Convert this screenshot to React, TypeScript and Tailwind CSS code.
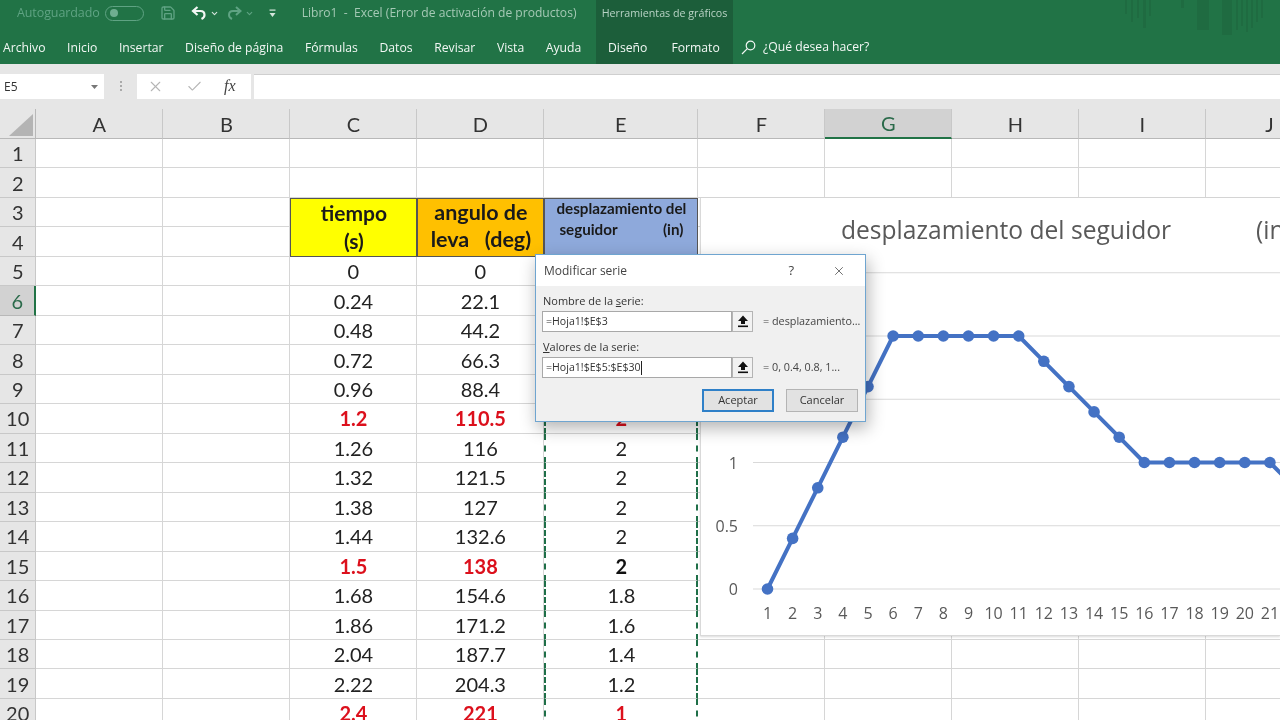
import React from "react";
import { Save, X, Check, ChevronDown } from "lucide-react";

const COLS = ["A", "B", "C", "D", "E", "F", "G", "H", "I", "J"];
type V = { t: string; red?: boolean; bold?: boolean };
const r = (t: string): V => ({ t, red: true });
const n = (t: string): V => ({ t });
const DATA: Record<number, V[]> = {
  5: [n("0"), n("0"), n("0")],
  6: [n("0.24"), n("22.1"), n("0.4")],
  7: [n("0.48"), n("44.2"), n("0.8")],
  8: [n("0.72"), n("66.3"), n("1.2")],
  9: [n("0.96"), n("88.4"), n("1.6")],
  10: [r("1.2"), r("110.5"), r("2")],
  11: [n("1.26"), n("116"), n("2")],
  12: [n("1.32"), n("121.5"), n("2")],
  13: [n("1.38"), n("127"), n("2")],
  14: [n("1.44"), n("132.6"), n("2")],
  15: [r("1.5"), r("138"), { t: "2", bold: true }],
  16: [n("1.68"), n("154.6"), n("1.8")],
  17: [n("1.86"), n("171.2"), n("1.6")],
  18: [n("2.04"), n("187.7"), n("1.4")],
  19: [n("2.22"), n("204.3"), n("1.2")],
  20: [r("2.4"), r("221"), r("1")],
};
const ROWS = Array.from({ length: 20 }, (_, i) => i + 1);
const SERIES = [0, 0.4, 0.8, 1.2, 1.6, 2, 2, 2, 2, 2, 2, 1.8, 1.6, 1.4, 1.2, 1, 1, 1, 1, 1, 1, 0.8];
const px = (i: number) => 66.5 + i * 25.12;
const py = (v: number) => 391 - v * 126.5;

function Tab({ children }: { children: React.ReactNode }) {
  return <span className="whitespace-nowrap text-[12.2px] leading-none text-[#f2f7f4]">{children}</span>;
}

function GridCell({ v, col }: { v?: V; col: number }) {
  const ants = col === 4;
  const borders = ants
    ? "border-b border-b-[#d6d6d6] border-x-2 border-x-[#1f6f48] [border-left-style:dashed] [border-right-style:dashed]"
    : "border-b border-r border-[#d6d6d6]";
  const tone = v?.red ? "font-bold text-[#dc101c]" : v?.bold ? "font-bold text-[#111]" : "text-[#222]";
  return (
    <div className={`flex items-center justify-center bg-white text-[20px] leading-none ${borders} ${tone}`}>
      {v?.t}
    </div>
  );
}

function RefButton() {
  return (
    <div className="flex h-[21px] w-[21px] items-center justify-center border border-[#b4b4b4] bg-[#f2f2f2]">
      <svg width="12" height="13" viewBox="0 0 12 13">
        <path d="M6 0.5 L11 6 H8 V9 H4 V6 H1 Z" fill="#111" />
        <rect x="1" y="10.5" width="10" height="1.6" fill="#111" />
      </svg>
    </div>
  );
}

function Field({ value, result, caret }: { value: string; result: string; caret?: boolean }) {
  return (
    <div className="flex items-center">
      <div className="flex h-[21px] w-[190px] items-center border border-[#a8a8a8] bg-white pl-[3px] text-[10.6px] text-[#333]">
        {value}
        {caret && <span className="h-[14px] w-px bg-[#222]" />}
      </div>
      <RefButton />
      <span className="ml-[10px] whitespace-nowrap text-[10.8px] text-[#444]">{result}</span>
    </div>
  );
}

export default function App() {
  return (
    <div className="relative h-[720px] w-[1280px] overflow-hidden bg-white font-['Open_Sans',sans-serif] blur-[0.3px]">
      {/* Title bar and ribbon tabs */}
      <header className="relative flex h-[64px] bg-[#217346]">
        <div className="flex w-[596px] flex-col">
          <div className="flex h-[26px] items-center pl-[17px]">
            <span className="text-[12.5px] tracking-[-0.1px] text-[#5fa383]">Autoguardado</span>
            <div className="ml-[5px] flex h-[15px] w-[39px] items-center rounded-full border border-[#5fa383] pl-[4px]">
              <span className="h-[8px] w-[8px] rounded-full bg-[#6fae90]" />
            </div>
            <Save className="ml-[16px] h-[16px] w-[16px] text-[#5fa383]" strokeWidth={2} />
            <svg className="ml-[15px]" width="16" height="14" viewBox="0 0 15 14" fill="none">
              <path d="M6 1 L1.5 5 L6 9 M2 5 H9 C12 5 13 7 13 9 C13 11 12 12 10 13" stroke="#f2f7f4" strokeWidth="2.2" />
            </svg>
            <ChevronDown className="ml-[3px] h-[9px] w-[9px] text-[#d5e5dc]" strokeWidth={3} />
            <svg className="ml-[8px]" width="15" height="14" viewBox="0 0 15 14" fill="none">
              <path d="M9 1 L13.5 5 L9 9 M13 5 H6 C3 5 2 7 2 9 C2 11 3 12 5 13" stroke="#5fa383" strokeWidth="2" />
            </svg>
            <ChevronDown className="ml-[3px] h-[9px] w-[9px] text-[#5fa383]" strokeWidth={3} />
            <svg className="ml-[15px]" width="7" height="9" viewBox="0 0 7 9">
              <rect x="0.5" y="0.5" width="6" height="1.2" fill="#d5e5dc" />
              <path d="M0.5 4 H6.5 L3.5 8 Z" fill="#d5e5dc" />
            </svg>
            <span className="ml-[26px] whitespace-nowrap text-[12.1px] text-[#a5c9b5]">
              Libro1&nbsp; -&nbsp; Excel (Error de activación de productos)
            </span>
          </div>
          <nav className="flex h-[38px] items-center gap-[21.6px] pl-[3px] pt-[6px]">
            <Tab>Archivo</Tab>
            <Tab>Inicio</Tab>
            <Tab>Insertar</Tab>
            <Tab>Diseño de página</Tab>
            <Tab>Fórmulas</Tab>
            <Tab>Datos</Tab>
            <Tab>Revisar</Tab>
            <Tab>Vista</Tab>
            <Tab>Ayuda</Tab>
          </nav>
        </div>
        <div className="flex w-[137px] flex-col bg-[#1c5e3a]">
          <div className="flex h-[26px] items-center justify-center">
            <span className="whitespace-nowrap text-[10.7px] text-[#b9d3c5]">Herramientas de gráficos</span>
          </div>
          <div className="flex h-[38px] items-center gap-[24px] pl-[12px] pt-[6px]">
            <Tab>Diseño</Tab>
            <Tab>Formato</Tab>
          </div>
        </div>
        <div className="flex items-end">
          <div className="flex h-[38px] items-center pl-[8px] pt-[4px]">
            <svg width="15" height="15" viewBox="0 0 15 15" fill="none" stroke="#f2f7f4" strokeWidth="1.2">
              <circle cx="9.5" cy="5.5" r="4.3" />
              <path d="M6.3 8.7 L1 14" />
            </svg>
            <span className="ml-[7px] whitespace-nowrap text-[12.2px] text-[#f2f7f4]">¿Qué desea hacer?</span>
          </div>
        </div>
        <svg className="absolute right-0 top-0" width="155" height="36" viewBox="0 0 155 36">
          <g fill="#1f6b41">
            <rect x="0" y="0" width="2" height="14" />
            <rect x="6" y="0" width="2" height="22" />
            <rect x="12" y="0" width="2" height="18" />
            <rect x="18" y="0" width="3" height="28" />
            <rect x="24" y="0" width="2" height="16" />
            <rect x="56" y="0" width="3" height="8" />
            <rect x="72" y="0" width="12" height="30" />
            <rect x="97" y="0" width="10" height="35" />
            <rect x="111" y="0" width="2" height="30" />
            <rect x="116" y="0" width="2" height="26" />
            <rect x="121" y="0" width="2" height="32" />
            <rect x="126" y="0" width="2" height="28" />
            <rect x="131" y="0" width="2" height="22" />
            <rect x="136" y="0" width="2" height="18" />
          </g>
        </svg>
      </header>

      {/* Formula bar */}
      <div className="flex h-[45px] items-center bg-[#e6e6e6] pb-[2px] pt-[1px]">
        <div className="flex h-[25px] w-[104px] items-center justify-between bg-white pl-[4px] pr-[6px] pt-[1px] text-[12px] text-[#333]">
          E5
          <svg width="7" height="4" viewBox="0 0 7 4"><path d="M0 0 H7 L3.5 4 Z" fill="#777" /></svg>
        </div>
        <div className="flex w-[33px] flex-col items-center gap-[2px]">
          <span className="h-[2px] w-[2px] bg-[#aaa]" />
          <span className="h-[2px] w-[2px] bg-[#aaa]" />
          <span className="h-[2px] w-[2px] bg-[#aaa]" />
        </div>
        <div className="flex h-[25px] w-[114px] items-center bg-white pl-[10px]">
          <X className="h-[17px] w-[17px] text-[#b5b5b5]" strokeWidth={1.5} />
          <Check className="ml-[22px] h-[17px] w-[17px] text-[#b5b5b5]" strokeWidth={1.5} />
          <span className="ml-[21px] font-['Liberation_Serif',serif] text-[16px] italic text-[#444]">fx</span>
        </div>
        <div className="ml-[3px] h-[25px] flex-1 border-t border-[#cfcfcf] bg-white" />
      </div>

      {/* Sheet */}
      <div className="grid grid-cols-[36.4px_127px_127px_127px_127px_154px_127px_127px_127px_127px_127px] grid-rows-[30px] auto-rows-[29.47px] font-['Lato',sans-serif]">
        <div className="relative border-b border-r border-[#b8b8b8] bg-[#e6e6e6]">
          <svg className="absolute left-[9px] top-[5px]" width="24" height="22" viewBox="0 0 24 22">
            <path d="M24 0 V22 H0 Z" fill="#b4b4b4" />
          </svg>
        </div>
        {COLS.map((c) => (
          <div
            key={c}
            className={`flex items-center justify-center border-r border-[#c8c8c8] text-[20px] ${
              c === "G"
                ? "border-b-2 border-b-[#217346] bg-[#d2d2d2] text-[#2a6a4a]"
                : "border-b border-b-[#b8b8b8] bg-[#e6e6e6] text-[#333]"
            }`}
          >
            {c}
          </div>
        ))}
        {ROWS.map((row) => (
          <React.Fragment key={row}>
            <div
              className={`flex items-center justify-center border-b text-[20px] ${
                row === 6
                  ? "border-r-2 border-[#b8b8b8] border-r-[#217346] bg-[#d2d2d2] text-[#2a6a4a]"
                  : "border-r border-[#c8c8c8] bg-[#e6e6e6] text-[#333]"
              }`}
            >
              {row}
            </div>
            {COLS.map((_, col) => {
              if (row === 4 && col >= 2 && col <= 4) return null;
              if (row === 3 && col === 2)
                return (
                  <div key={col} className="row-span-2 grid grid-rows-2 items-center border border-[#555] bg-[#ffff00] pb-[2px] text-center text-[21px] font-bold leading-none text-[#1a1a1a]">
                    <span>tiempo</span>
                    <span>(s)</span>
                  </div>
                );
              if (row === 3 && col === 3)
                return (
                  <div key={col} className="row-span-2 grid grid-rows-2 items-center border border-[#555] bg-[#ffc000] pb-[2px] text-center text-[21.5px] font-bold leading-none text-[#1a1a1a]">
                    <span>angulo de</span>
                    <span className="whitespace-pre">leva   (deg)</span>
                  </div>
                );
              if (row === 3 && col === 4)
                return (
                  <div key={col} className="row-span-2 flex flex-col items-center border border-[#555] bg-[#8ea9db] text-[15.2px] font-bold leading-[21px] text-[#1a1a1a]">
                    <span className="-mt-px">desplazamiento del</span>
                    <div className="flex w-full justify-between pl-[14px] pr-[14px]">
                      <span>seguidor</span>
                      <span>(in)</span>
                    </div>
                  </div>
                );
              const v = col >= 2 && col <= 4 ? DATA[row]?.[col - 2] : undefined;
              return row >= 5 ? <GridCell key={col} v={v} col={col} /> : <GridCell key={col} col={-1} />;
            })}
          </React.Fragment>
        ))}
      </div>

      {/* Embedded chart floats above the sheet */}
      <div className="absolute left-[700px] top-[198px] h-[438px] w-[580px] border-b border-l border-[#d9d9d9] bg-white shadow-[0_1px_2px_rgba(0,0,0,0.15)]">
        <svg width="580" height="438" viewBox="0 0 580 438" className="font-['Open_Sans',sans-serif]">
          <text x="140" y="41" fontSize="24.6" fill="#595959">desplazamiento del seguidor</text>
          <text x="555" y="41" fontSize="24.6" fill="#595959">(in</text>
          {[0, 0.5, 1, 1.5, 2, 2.5].map((v) => (
            <line key={v} x1="52" x2="580" y1={py(v)} y2={py(v)} stroke="#d9d9d9" strokeWidth="1" />
          ))}
          {[0, 0.5, 1].map((v) => (
            <text key={v} x="37" y={py(v) + 6} fontSize="16" fill="#595959" textAnchor="end">{v}</text>
          ))}
          {Array.from({ length: 21 }, (_, i) => (
            <text key={i} x={px(i)} y="421" fontSize="16" fill="#595959" textAnchor="middle">{i + 1}</text>
          ))}
          <polyline
            fill="none"
            stroke="#4472c4"
            strokeWidth="4"
            strokeLinejoin="round"
            points={SERIES.map((v, i) => `${px(i)},${py(v)}`).join(" ")}
          />
          {SERIES.map((v, i) => (
            <circle key={i} cx={px(i)} cy={py(v)} r="5.8" fill="#4472c4" />
          ))}
        </svg>
      </div>

      {/* Dialog */}
      <div className="absolute left-[535px] top-[254px] flex h-[168px] w-[331px] flex-col border border-[#6fa5d0] bg-[#f0f0f0] shadow-[2px_6px_16px_rgba(0,0,0,0.3)]">
        <div className="flex h-[31px] items-center bg-white pl-[8px] pt-[1px] text-[12px] text-[#444]">
          <span className="flex-1">Modificar serie</span>
          <span className="mr-[38px] text-[13px]">?</span>
          <X className="mr-[19px] h-[14px] w-[14px] text-[#333]" strokeWidth={1.2} />
        </div>
        <div className="flex flex-1 flex-col pl-[6px] pt-[7px] text-[11px] text-[#333]">
          <span className="mb-[3px] h-[15px] pl-[1px] leading-[15px]">Nombre de la <u>s</u>erie:</span>
          <Field value="=Hoja1!$E$3" result="= desplazamiento..." />
          <span className="mb-[3px] mt-[7px] h-[15px] pl-[1px] leading-[15px]"><u>V</u>alores de la serie:</span>
          <Field value="=Hoja1!$E$5:$E$30" result="= 0, 0.4, 0.8, 1..." caret />
          <div className="mt-[11px] flex justify-end gap-[12px] pr-[7px]">
            <button className="h-[23px] w-[72px] border-2 border-[#2f80c8] bg-[#e2e2e2] text-[11px] text-[#333]">Aceptar</button>
            <button className="h-[23px] w-[72px] border border-[#b4b4b4] bg-[#e2e2e2] text-[11px] text-[#333]">Cancelar</button>
          </div>
        </div>
      </div>
    </div>
  );
}
